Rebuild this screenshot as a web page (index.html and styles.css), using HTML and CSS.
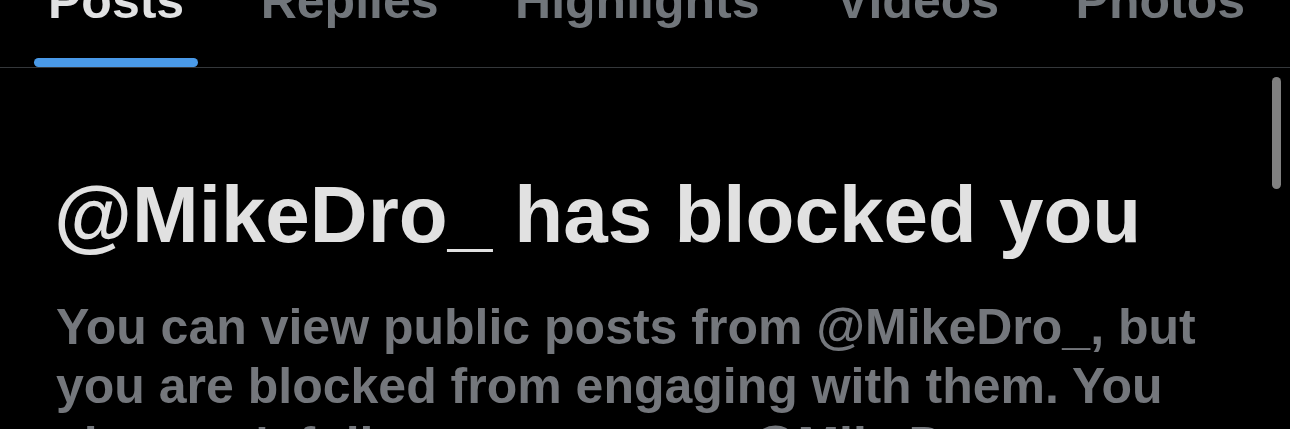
FILE: index.html
```html
<!DOCTYPE html>
<html lang="en">
<head>
    <meta charset="UTF-8">
    <meta name="viewport" content="width=device-width, initial-scale=1.0">
    <title>Blocked</title>
    <link rel="stylesheet" href="styles.css">
</head>
<body>
    <div class="profile">
        <nav class="tabs">
            <div class="tab active"><span class="tab-label">Posts</span><span class="tab-bar"></span></div>
            <div class="tab"><span class="tab-label">Replies</span><span class="tab-bar"></span></div>
            <div class="tab"><span class="tab-label">Highlights</span><span class="tab-bar"></span></div>
            <div class="tab"><span class="tab-label">Videos</span><span class="tab-bar"></span></div>
            <div class="tab"><span class="tab-label">Photos</span><span class="tab-bar"></span></div>
        </nav>

        <div class="blocked">
            <h1>@MikeDro_ has blocked you</h1>
            <p>You can view public posts from @MikeDro_, but you are blocked from engaging with them. You also can't follow or message @MikeDro_.</p>
        </div>

        <div class="scrollbar"></div>
    </div>
</body>
</html>
```

FILE: styles.css
```css
body {
    font-family: "Liberation Sans", Arial, sans-serif;
    background-color: #000000;
    color: #e7e9ea;
    margin: 0;
    padding: 0;
    overflow: hidden;
}
.profile {
    position: relative;
    height: 429px;
    overflow: hidden;
}
.tabs {
    display: flex;
    justify-content: space-between;
    margin-top: -24px;
    padding: 0 31px 0 34px;
    border-bottom: 1px solid #34373a;
}
.tab {
    display: flex;
    flex-direction: column;
    padding: 0 14px;
    margin: 0 -14px;
}
.tab:first-child {
    margin-left: 0;
}
.tab:last-child {
    margin-right: 0;
}
.tab-label {
    font-size: 50px;
    line-height: 50px;
    font-weight: bold;
    color: #71767b;
    white-space: nowrap;
}
.tab-bar {
    height: 9px;
    margin: 32px -14px 0;
    border-radius: 5px;
}
.tab.active .tab-label {
    color: #e1e2e3;
}
.tab.active .tab-bar {
    background: #4a9ae8;
}
.blocked {
    padding: 99px 55px 0 54px;
}
h1 {
    margin: 0;
    font-size: 80px;
    line-height: 96px;
    font-weight: bold;
    color: #e1e1e1;
    white-space: nowrap;
}
p {
    margin: 35px 0 0 2px;
    font-size: 50px;
    line-height: 59px;
    font-weight: bold;
    color: #74777c;
}
.scrollbar {
    position: absolute;
    top: 77px;
    left: 1272px;
    width: 9px;
    height: 112px;
    border-radius: 5px;
    background: #808080;
}
```
